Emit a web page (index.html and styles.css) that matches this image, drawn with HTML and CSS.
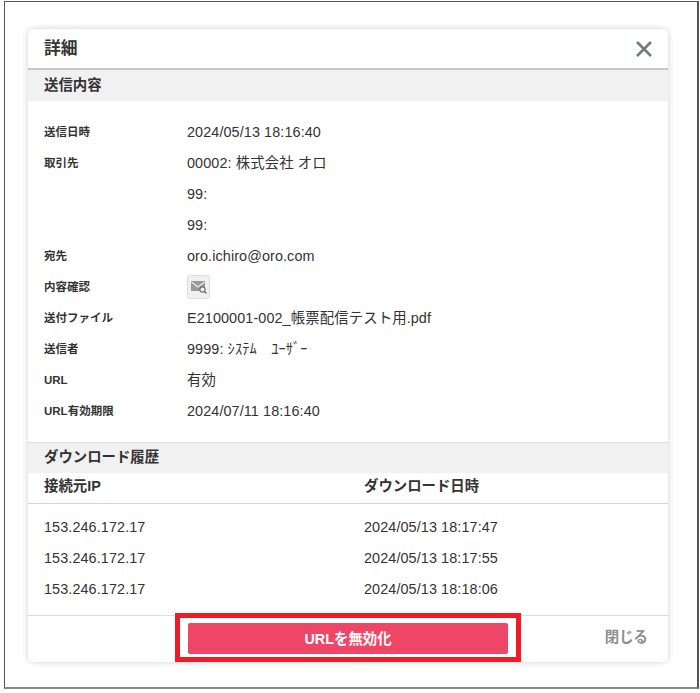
FILE: index.html
```html
<!DOCTYPE html>
<html lang="ja">
<head>
    <meta charset="UTF-8">
    <meta name="viewport" content="width=device-width, initial-scale=1.0">
    <title>詳細</title>
    <link rel="stylesheet" href="styles.css">
</head>
<body>
    <div class="frame">
        <div class="modal">
            <div class="modal-header">
                <h1>詳細</h1>
                <svg class="close-icon" width="18" height="18" viewBox="0 0 18 18" aria-label="閉じる">
                    <path d="M2 2 L16 16 M16 2 L2 16" stroke="#6e7a82" stroke-width="2.6" fill="none"/>
                </svg>
            </div>
            <div class="section-title">送信内容</div>
            <div class="detail">
                <div class="row"><div class="label">送信日時</div><div class="value">2024/05/13 18:16:40</div></div>
                <div class="row"><div class="label">取引先</div><div class="value">00002: 株式会社 オロ</div></div>
                <div class="row"><div class="label"></div><div class="value">99:</div></div>
                <div class="row"><div class="label"></div><div class="value">99:</div></div>
                <div class="row"><div class="label">宛先</div><div class="value">oro.ichiro@oro.com</div></div>
                <div class="row">
                    <div class="label">内容確認</div>
                    <div class="value">
                        <span class="mail-button">
                            <svg width="16" height="14" viewBox="0 0 16 14">
                                <path d="M0 1 H14 V11 H0 Z" fill="#9a9a9a"/>
                                <path d="M0.5 2 L7 7 L13.5 2" stroke="#f0f0f0" stroke-width="1.1" fill="none"/>
                                <circle cx="11.5" cy="9.5" r="2.6" fill="#f0f0f0" stroke="#707070" stroke-width="1.1"/>
                                <path d="M13.4 11.4 L15.5 13.5" stroke="#707070" stroke-width="1.4"/>
                            </svg>
                        </span>
                    </div>
                </div>
                <div class="row"><div class="label">送付ファイル</div><div class="value">E2100001-002_帳票配信テスト用.pdf</div></div>
                <div class="row"><div class="label">送信者</div><div class="value">9999: ｼｽﾃﾑ　ﾕｰｻﾞｰ</div></div>
                <div class="row"><div class="label">URL</div><div class="value">有効</div></div>
                <div class="row"><div class="label">URL有効期限</div><div class="value">2024/07/11 18:16:40</div></div>
            </div>
            <div class="section-title section-title-border">ダウンロード履歴</div>
            <div class="history-head">
                <div>接続元IP</div>
                <div>ダウンロード日時</div>
            </div>
            <div class="history">
                <div class="history-row"><div>153.246.172.17</div><div>2024/05/13 18:17:47</div></div>
                <div class="history-row"><div>153.246.172.17</div><div>2024/05/13 18:17:55</div></div>
                <div class="history-row"><div>153.246.172.17</div><div>2024/05/13 18:18:06</div></div>
            </div>
            <div class="modal-footer">
                <button class="danger-button">URLを無効化</button>
                <span class="close-link">閉じる</span>
            </div>
        </div>
    </div>
</body>
</html>
```

FILE: styles.css
```css
body {
    font-family: "Liberation Sans", "Noto Sans CJK JP", sans-serif;
    background-color: #fff;
    color: #333;
    margin: 0;
}
.frame {
    box-sizing: border-box;
    width: 695px;
    height: 688px;
    margin: 1px 0 0 4px;
    padding: 27px 29px 0 23px;
    border: 1px solid #555;
    border-right-width: 2px;
    border-bottom: 2px solid #888;
}
.modal {
    height: 633px;
    background: #fff;
    border-radius: 5px;
    box-shadow: 0 0 6px rgba(0, 0, 0, 0.2);
    display: flex;
    flex-direction: column;
}
.modal-header {
    box-sizing: border-box;
    height: 41px;
    display: flex;
    align-items: center;
    justify-content: space-between;
    padding: 0 15px 0 16px;
    border-bottom: 2px solid #c8c8c8;
}
.modal-header h1 {
    margin: 0;
    font-size: 16.8px;
    line-height: 20px;
    font-weight: 700;
    color: #333;
}
.section-title {
    box-sizing: border-box;
    height: 31px;
    line-height: 30px;
    padding-left: 16px;
    background: #f1f1f1;
    font-size: 14.4px;
    font-weight: 700;
}
.section-title-border {
    line-height: 29px;
    border-top: 1px solid #ddd;
}
.detail {
    padding: 15px 16px 16px;
}
.row {
    display: flex;
    align-items: center;
    height: 31px;
}
.label {
    width: 143px;
    font-size: 11.5px;
    line-height: 16px;
    font-weight: 700;
}
.value {
    font-size: 14.4px;
    line-height: 20px;
    letter-spacing: 0.1px;
}
.mail-button {
    display: flex;
    align-items: center;
    justify-content: center;
    box-sizing: border-box;
    width: 23px;
    height: 24px;
    background: #f0f0f0;
    border: 1px solid #ddd;
    border-radius: 3px;
}
.history-head {
    display: grid;
    grid-template-columns: 320px 1fr;
    height: 30px;
    line-height: 26px;
    padding-left: 16px;
    border-bottom: 1px solid #d4d4d4;
    font-size: 14.4px;
    font-weight: 700;
}
.history {
    padding: 7px 0 11px 16px;
    border-bottom: 1px solid #ddd;
}
.history-row {
    display: grid;
    grid-template-columns: 320px 1fr;
    align-items: center;
    height: 31px;
    font-size: 14.4px;
    letter-spacing: 0.1px;
}
.modal-footer {
    display: grid;
    grid-template-columns: 1fr 320px 1fr;
    align-items: center;
    padding: 7px 20px 8px;
    flex: 1;
}
.danger-button {
    grid-column: 2;
    position: relative;
    height: 31px;
    padding: 0 0 3px;
    border: none;
    border-radius: 2px;
    background: #ef4566;
    color: #fff;
    font-family: inherit;
    font-size: 14.4px;
    font-weight: 700;
}
/* red annotation box drawn over the footer */
.danger-button::after {
    content: "";
    position: absolute;
    top: -10px;
    bottom: -8px;
    left: -13px;
    right: -13px;
    border: 5px solid #ee1c25;
}
.close-link {
    justify-self: end;
    margin-bottom: 3px;
    font-size: 14.4px;
    line-height: 20px;
    font-weight: 700;
    color: #8a8f94;
}
```
